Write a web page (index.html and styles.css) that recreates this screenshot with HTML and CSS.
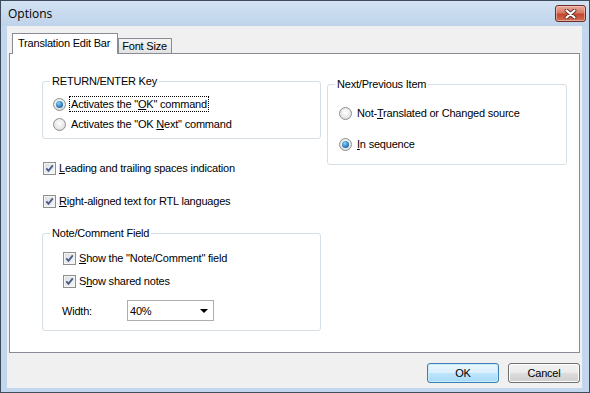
FILE: index.html
```html
<!DOCTYPE html>
<html lang="en">
<head>
    <meta charset="UTF-8">
    <title>Options</title>
    <link rel="stylesheet" href="styles.css">
</head>
<body>
    <div class="window">
        <div class="titlebar">
            <span class="title">Options</span>
            <button class="close-btn" aria-label="Close">
                <svg width="13" height="10" viewBox="0 0 13 10">
                    <path d="M2.5 1.5 L10.5 8.5 M10.5 1.5 L2.5 8.5" stroke="#5a2a22" stroke-width="3.8" stroke-linecap="round"/>
                    <path d="M2.5 1.5 L10.5 8.5 M10.5 1.5 L2.5 8.5" stroke="#ffffff" stroke-width="2.2" stroke-linecap="round"/>
                </svg>
            </button>
        </div>

        <div class="client">
            <div class="tabs">
                <div class="tab active">Translation Edit Bar</div>
                <div class="tab">Font Size</div>
            </div>

            <div class="panel">
                <div class="col-left">
                    <fieldset class="group group-return">
                        <legend>RETURN/ENTER Key</legend>
                        <div class="opt">
                            <span class="radio checked"></span>
                            <span class="focus">Activates the "<u>O</u>K" command</span>
                        </div>
                        <div class="opt">
                            <span class="radio"></span>
                            <span>Activates the "OK <u>N</u>ext" command</span>
                        </div>
                    </fieldset>

                    <div class="opt check-row first">
                        <span class="check checked">
                            <svg width="11" height="11" viewBox="0 0 11 11"><path d="M2.3 5.3 L4.5 7.8 L8.8 2.4" fill="none" stroke="#4a5d8f" stroke-width="1.9"/></svg>
                        </span>
                        <span><u>L</u>eading and trailing spaces indication</span>
                    </div>
                    <div class="opt check-row second">
                        <span class="check checked">
                            <svg width="11" height="11" viewBox="0 0 11 11"><path d="M2.3 5.3 L4.5 7.8 L8.8 2.4" fill="none" stroke="#4a5d8f" stroke-width="1.9"/></svg>
                        </span>
                        <span><u>R</u>ight-aligned text for RTL languages</span>
                    </div>

                    <fieldset class="group group-note">
                        <legend>Note/Comment Field</legend>
                        <div class="opt">
                            <span class="check checked">
                                <svg width="11" height="11" viewBox="0 0 11 11"><path d="M2.3 5.3 L4.5 7.8 L8.8 2.4" fill="none" stroke="#4a5d8f" stroke-width="1.9"/></svg>
                            </span>
                            <span><u>S</u>how the "Note/Comment" field</span>
                        </div>
                        <div class="opt">
                            <span class="check checked">
                                <svg width="11" height="11" viewBox="0 0 11 11"><path d="M2.3 5.3 L4.5 7.8 L8.8 2.4" fill="none" stroke="#4a5d8f" stroke-width="1.9"/></svg>
                            </span>
                            <span>S<u>h</u>ow shared notes</span>
                        </div>
                        <div class="field-row">
                            <span class="field-label">Width:</span>
                            <div class="select">
                                <span>40%</span>
                                <span class="arrow"></span>
                            </div>
                        </div>
                    </fieldset>
                </div>

                <div class="col-right">
                    <fieldset class="group group-next">
                        <legend>Next/Previous Item</legend>
                        <div class="opt">
                            <span class="radio"></span>
                            <span>Not-<u>T</u>ranslated or Changed source</span>
                        </div>
                        <div class="opt">
                            <span class="radio checked"></span>
                            <span><u>I</u>n sequence</span>
                        </div>
                    </fieldset>
                </div>
            </div>

            <div class="buttons">
                <button class="btn default">OK</button>
                <button class="btn">Cancel</button>
            </div>
        </div>
    </div>
</body>
</html>
```

FILE: styles.css
```css
* {
    margin: 0;
    padding: 0;
    box-sizing: border-box;
}

body {
    font-family: 'Liberation Sans', Arial, sans-serif;
    font-size: 11px;
    letter-spacing: -0.2px;
    color: #000;
    width: 590px;
    height: 393px;
    overflow: hidden;
}

u {
    text-decoration: underline;
    text-underline-offset: 1px;
}

/* window frame */
.window {
    width: 590px;
    height: 393px;
    border: 1px solid #3d4b5c;
    background: #c2d6ed;
    display: flex;
    flex-direction: column;
}

.titlebar {
    height: 25px;
    display: flex;
    align-items: flex-start;
    justify-content: space-between;
    padding: 0 3px 0 7px;
    background: linear-gradient(to bottom, #d3e2f3, #bed3eb);
}

.title {
    font-family: 'Open Sans', 'Noto Sans', sans-serif;
    font-size: 12px;
    letter-spacing: 0;
    line-height: 16px;
    margin-top: 5px;
    color: #000;
}

.close-btn {
    width: 31px;
    height: 17px;
    margin-top: 4px;
    border: 1px solid #6b2f25;
    border-radius: 3px;
    background: linear-gradient(to bottom, #e8aa9c, #d77a65 45%, #c4452c 55%, #d2705a);
    display: flex;
    align-items: center;
    justify-content: center;
    box-shadow: inset 0 0 0 1px rgba(255, 220, 210, 0.5);
}

.client {
    flex: 1;
    margin: 0 7px 4px 6px;
    background: #f0f0f0;
    display: flex;
    flex-direction: column;
}

/* tabs */
.tabs {
    display: flex;
    align-items: flex-end;
    margin: 6px 0 0 5px;
    height: 21px;
}

.tab {
    height: 15px;
    line-height: 14px;
    padding: 0 4px 0 3px;
    border: 1px solid #898c95;
    border-bottom: none;
    background: linear-gradient(to bottom, #f4f4f4, #e2e2e2);
}

.tab.active {
    height: 21px;
    line-height: 19px;
    padding: 0 7px 0 5px;
    background: #fff;
    position: relative;
    z-index: 1;
    margin-bottom: -1px;
}

.panel {
    height: 300px;
    margin: 0 2px;
    border: 1px solid #898c95;
    background: #fff;
    display: flex;
    gap: 6px;
    padding: 21px 0 0 32px;
}

.col-left {
    width: 279px;
    display: flex;
    flex-direction: column;
}

.col-right {
    width: 240px;
    padding-top: 3px;
}

/* group boxes */
.group {
    border: 1px solid #d5dfe5;
    border-radius: 3px;
    min-width: 0;
}

.group legend {
    line-height: 13px;
    padding: 0 2px;
}

.group-return {
    padding: 6px 0 4px 10px;
}

.group-return legend {
    margin-left: -3px;
}

.group-next {
    padding: 12px 0 10px 11px;
}

.group-next legend {
    margin-left: -4px;
}

.group-next .opt + .opt {
    margin-top: 11px;
}

.group-note {
    margin-top: 16px;
    padding: 8px 0 9px 20px;
}

.group-note legend {
    margin-left: -13px;
}

.group-note .opt + .opt {
    margin-top: 3px;
}

/* radio & checkbox rows */
.opt {
    height: 20px;
    display: flex;
    align-items: center;
}

.radio {
    width: 13px;
    height: 13px;
    border-radius: 50%;
    border: 1px solid #8e8f8f;
    background: radial-gradient(circle at 50% 40%, #ffffff, #e6e6e6 60%, #cfcfcf);
    margin-right: 5px;
    flex-shrink: 0;
    display: flex;
    align-items: center;
    justify-content: center;
}

.radio.checked::after {
    content: "";
    width: 7px;
    height: 7px;
    border-radius: 50%;
    background: radial-gradient(circle at 40% 35%, #8fd3f5, #2f7fc2 55%, #17467c);
}

.check {
    width: 13px;
    height: 13px;
    border: 1px solid #8e8f8f;
    background: linear-gradient(135deg, #dcdcdc, #f8f8f8);
    box-shadow: inset 0 0 0 1px #f4f4f4;
    margin-right: 3px;
    flex-shrink: 0;
    display: flex;
}

.focus {
    outline: 1px dotted #000;
    outline-offset: 1px;
}

.check-row {
    margin-left: 1px;
}

.check-row.first {
    margin-top: 19px;
}

.check-row.second {
    margin-top: 13px;
}

/* width combo */
.field-row {
    display: flex;
    align-items: center;
    margin-top: 9px;
    height: 21px;
}

.field-label {
    width: 65px;
    margin-left: -1px;
}

.select {
    width: 87px;
    height: 21px;
    border: 1px solid #abadb3;
    background: #fff;
    display: flex;
    align-items: center;
    justify-content: space-between;
    padding: 0 5px 0 2px;
}

.arrow {
    width: 0;
    height: 0;
    border-left: 4px solid transparent;
    border-right: 4px solid transparent;
    border-top: 4px solid #000;
    margin-top: 1px;
}

/* dialog buttons */
.buttons {
    display: flex;
    justify-content: flex-end;
    gap: 9px;
    margin-top: 10px;
    padding-right: 2px;
}

.btn {
    width: 72px;
    height: 20px;
    font-family: 'Liberation Sans', Arial, sans-serif;
    font-size: 11px;
    letter-spacing: -0.2px;
    color: #000;
    border: 1px solid #707070;
    border-radius: 3px;
    background: linear-gradient(to bottom, #f2f2f2, #ebebeb 50%, #dddddd 51%, #cfcfcf);
    box-shadow: inset 0 0 0 1px #fcfcfc;
}

.btn.default {
    border-color: #3c7fb1;
    background: linear-gradient(to bottom, #eaf6fd, #d9f0fc 50%, #bee6fd 51%, #a7d9f5);
    box-shadow: inset 0 0 0 1px #c6ecfc;
}
```
